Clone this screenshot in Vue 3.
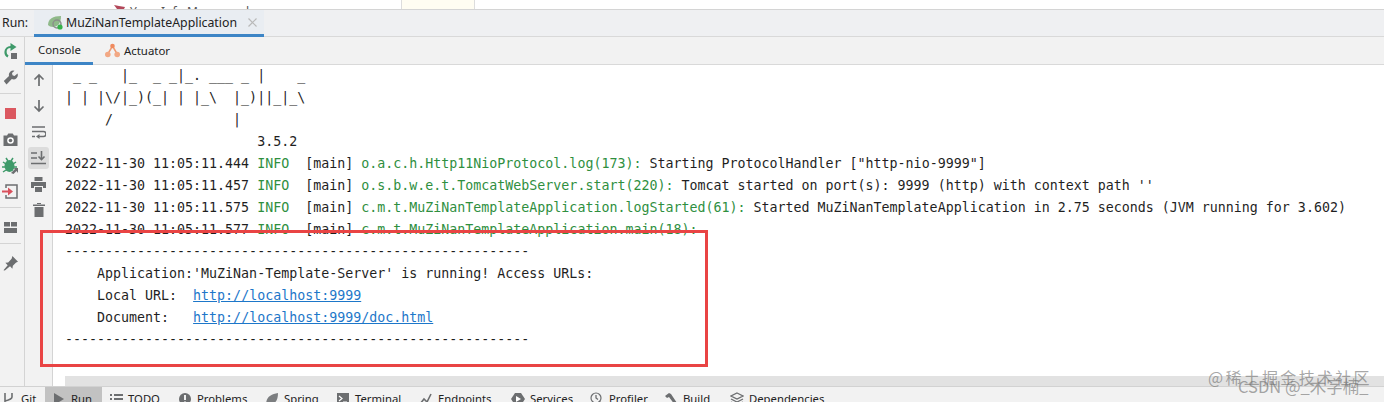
<script setup>
const banner = [
  ' _ _   |_  _ _|_. ___ _ |    _ ',
  '| | |\\/|_)(_| | |_\\  |_)||_|_\\ ',
  '     /               |         ',
  '                        3.5.2 ',
]
const logs = [
  { t: '2022-11-30 11:05:11.444 ', c: 'o.a.c.h.Http11NioProtocol.log(173):', m: ' Starting ProtocolHandler ["http-nio-9999"]' },
  { t: '2022-11-30 11:05:11.457 ', c: 'o.s.b.w.e.t.TomcatWebServer.start(220):', m: " Tomcat started on port(s): 9999 (http) with context path ''" },
  { t: '2022-11-30 11:05:11.575 ', c: 'c.m.t.MuZiNanTemplateApplication.logStarted(61):', m: ' Started MuZiNanTemplateApplication in 2.75 seconds (JVM running for 3.602)' },
  { t: '2022-11-30 11:05:11.577 ', c: 'c.m.t.MuZiNanTemplateApplication.main(18):', m: '' },
]
const thread = '  [main] '
const dashes = '-'.repeat(58)
const appLine = "    Application:'MuZiNan-Template-Server' is running! Access URLs:"
const localLabel = '    Local URL:  '
const docLabel = '    Document:   '
const bottom = [
  { k: 'git', label: 'Git', w: 45 },
  { k: 'run', label: 'Run', w: 57 },
  { k: 'todo', label: 'TODO', w: 69 },
  { k: 'problems', label: 'Problems', w: 87 },
  { k: 'spring', label: 'Spring', w: 71 },
  { k: 'terminal', label: 'Terminal', w: 83 },
  { k: 'endpoints', label: 'Endpoints', w: 92 },
  { k: 'services', label: 'Services', w: 79 },
  { k: 'profiler', label: 'Profiler', w: 74 },
  { k: 'build', label: 'Build', w: 66 },
  { k: 'deps', label: 'Dependencies', w: 110 },
]
</script>

<template>
  <div class="ide">
    <div class="strip">
      <svg class="strip-icon" width="14" height="9" viewBox="0 0 14 9"><path d="M1 5l5 1 6 1-1 2H4z" fill="#b3485a" /></svg>
      <span class="strip-text">Yuan Info Manager-d</span>
      <div class="strip-panel"></div>
    </div>

    <div class="runbar">
      <span class="run-label">Run:</span>
      <div class="run-tab">
        <svg width="16" height="16" viewBox="0 0 16 16">
          <path d="M1 11C1 5 6 2 14 2c0 7-3 11-8 11-2 0-4-1-5-2z" fill="#8fb98a" />
          <circle cx="10" cy="10" r="4" fill="none" stroke="#8a8f8a" stroke-width="1.500" />
          <circle cx="13" cy="13" r="2.600" fill="#35b24a" />
        </svg>
        <span>MuZiNanTemplateApplication</span>
        <svg class="close" width="9" height="9" viewBox="0 0 9 9"><path d="M.5.5l8 8M8.500.5l-8 8" stroke="#b9b9b9" stroke-width="1.200" /></svg>
      </div>
    </div>

    <div class="body">
      <div class="tool1">
        <div class="btn">
          <svg width="15" height="16" viewBox="0 0 15 16"><path d="M11 4H7.500A5 5 0 0 0 2.500 9a5 5 0 0 0 2.500 4.500" fill="none" stroke="#3f9a6a" stroke-width="2.200" /><path d="M7.500 0l6 4-6 4z" fill="#3f9a6a" /><rect x="8" y="10" width="6" height="6" fill="#6c6e70" /></svg>
        </div>
        <div class="btn">
          <svg width="15" height="15" viewBox="0 0 15 15"><path d="M14.500 3.500l-3 2.500-2-.8-.5-2.200L11.500.8A4.300 4.300 0 0 0 6 6L.8 11 3.500 14.500 8.800 9a4.300 4.300 0 0 0 5.700-5.500z" fill="#6c6e70" /></svg>
        </div>
        <div class="sep"></div>
        <div class="btn"><span class="stop"></span></div>
        <div class="btn">
          <svg width="15" height="13" viewBox="0 0 15 13"><path d="M.5 2.500h3.500L5.300.5h4.400L11 2.500h3.500V13H.5z" fill="#6c6e70" /><circle cx="7.500" cy="7.500" r="3.300" fill="#fff" /><circle cx="7.500" cy="7.500" r="1.800" fill="#6c6e70" /></svg>
        </div>
        <div class="btn">
          <svg width="17" height="17" viewBox="0 0 17 17"><ellipse cx="7.500" cy="9" rx="5" ry="6" fill="#3f9a6a" /><path d="M1 5l3 2M14 5l-3 2M0 10h3M15 10h-3M1 15l3-2M4 1l2 3M11 1L9 4" stroke="#3f9a6a" stroke-width="1.500" /><path d="M9 16l4-4-2-1h5v5l-1.500-2-3 3z" fill="#6c6e70" /></svg>
        </div>
        <div class="btn">
          <svg width="17" height="15" viewBox="0 0 17 15"><path d="M4 4V1h11v13H4v-3" fill="none" stroke="#6c6e70" stroke-width="1.500" /><path d="M0 6.500h6V3.500l5 4-5 4v-3H0z" fill="#d9505c" /></svg>
        </div>
        <div class="sep"></div>
        <div class="btn">
          <svg width="13" height="11" viewBox="0 0 13 11"><path d="M0 0h6v4.500H0zM7 0h6v4.500H7zM0 6h13v5H0z" fill="#6c6e70" /></svg>
        </div>
        <div class="sep"></div>
        <div class="btn">
          <svg width="15" height="15" viewBox="0 0 16 16"><path d="M10 0l6 6-2 .8-3.500 3.700-.5 3-2.500-2.500L2 15.500l-1.500-.2 4.500-5.500L2.500 7.300l3-.5L9.200 3z" fill="#6c6e70" /></svg>
        </div>
      </div>

      <div class="main">
        <div class="subtabs">
          <div class="subtab active">Console</div>
          <div class="subtab">
            <svg width="15" height="15" viewBox="0 0 15 15"><path d="M2.500 11.500L7.500 3l5 8.500" fill="none" stroke="#ef9a72" stroke-width="1.500" /><circle cx="7.500" cy="3" r="2.300" fill="#ef8a5e" /><circle cx="2.800" cy="11.500" r="2.800" fill="#f2a884" /><circle cx="12.200" cy="11.500" r="2.800" fill="#f2a884" /></svg>
            <span>Actuator</span>
          </div>
        </div>

        <div class="content">
          <div class="tool2">
            <div class="btn2">
              <svg width="14" height="14" viewBox="0 0 14 14"><path d="M7 13V2M2.500 6.500L7 2l4.500 4.500" fill="none" stroke="#6c6e70" stroke-width="1.700" /></svg>
            </div>
            <div class="btn2">
              <svg width="14" height="14" viewBox="0 0 14 14"><path d="M7 1v11M2.500 7.500L7 12l4.500-4.500" fill="none" stroke="#6c6e70" stroke-width="1.700" /></svg>
            </div>
            <div class="btn2">
              <svg width="15" height="14" viewBox="0 0 15 14"><path d="M1 2h13M1 6.500h11.500a2.200 2.200 0 0 1 0 5H7M1 11.500h3" fill="none" stroke="#6c6e70" stroke-width="1.500" /><path d="M8.500 9v5L5 11.500z" fill="#6c6e70" /></svg>
            </div>
            <div class="btn2 on">
              <svg width="15" height="14" viewBox="0 0 15 14"><path d="M0 2h6M0 7h6M0 12.500h15M10.500 0v8M7.500 5.500l3 3.200 3-3.200" fill="none" stroke="#6c6e70" stroke-width="1.600" /></svg>
            </div>
            <div class="btn2">
              <svg width="15" height="15" viewBox="0 0 15 15"><path d="M3.500 0h8v4h-8zM0 5h15v6h-3V9H3v2H0zM4 10h7v5H4z" fill="#6c6e70" /></svg>
            </div>
            <div class="btn2">
              <svg width="12" height="14" viewBox="0 0 12 14"><path d="M0 1.500h12V3H0zM4 0h4v1H4zM1.500 4h9v10h-9z" fill="#6c6e70" /></svg>
            </div>
          </div>

          <div class="console">
            <div class="lines">
              <div v-for="(b, i) in banner" :key="'b' + i" class="line">{{ b }}</div>
              <div v-for="l in logs" :key="l.t" class="line">{{ l.t }}<span class="green">INFO</span>{{ thread }}<span class="green">{{ l.c }}</span>{{ l.m }}</div>
              <div class="line">{{ dashes }}</div>
              <div class="line">{{ appLine }}</div>
              <div class="line">{{ localLabel }}<span class="link">http://localhost:9999</span></div>
              <div class="line">{{ docLabel }}<span class="link">http://localhost:9999/doc.html</span></div>
              <div class="line">{{ dashes }}</div>
            </div>
            <div class="hscroll"></div>
          </div>
        </div>
      </div>
    </div>

    <div class="statusbar">
      <div v-for="b in bottom" :key="b.k" class="st" :class="{ cur: b.k === 'run' }" :style="{ width: b.w + 'px' }">
        <svg width="14" height="14" viewBox="0 0 14 14">
          <path v-if="b.k === 'git'" d="M3 1v12M10 1v4c0 2-3 3-7 4" fill="none" stroke="#6c6e70" stroke-width="1.600" />
          <template v-else-if="b.k === 'run'"><path d="M2 1l10 6-10 6z" fill="#6c6e70" /><circle cx="12" cy="12" r="2" fill="#35b24a" /></template>
          <path v-else-if="b.k === 'todo'" d="M1 2h2v2H1zM5 2h9v2H5zM1 6h2v2H1zM5 6h9v2H5zM1 10h2v2H1zM5 10h9v2H5z" fill="#6c6e70" />
          <template v-else-if="b.k === 'problems'"><circle cx="7" cy="7" r="6" fill="#6c6e70" /><path d="M7 3v5M7 9.500v2" stroke="#fff" stroke-width="1.800" /></template>
          <path v-else-if="b.k === 'spring'" d="M1 13C1 5 6 2 13 1c0 8-3 11-8 11-1 0-3 0-4 1z" fill="#7c7e80" />
          <template v-else-if="b.k === 'terminal'"><rect x="1" y="1" width="12" height="12" fill="#6c6e70" /><path d="M3 4l3 2.500-3 2.500M7 10h4" fill="none" stroke="#fff" stroke-width="1.200" /></template>
          <path v-else-if="b.k === 'endpoints'" d="M1 12l4-5 3 3 4-8" fill="none" stroke="#6c6e70" stroke-width="1.600" />
          <template v-else-if="b.k === 'services'"><path d="M4 1h6l4 6-4 6H4L0 7z" fill="#6c6e70" /><path d="M5 4l5 3-5 3z" fill="#fff" /></template>
          <template v-else-if="b.k === 'profiler'"><circle cx="6" cy="6" r="5" fill="none" stroke="#6c6e70" stroke-width="1.200" /><path d="M6 3v3l2 1.500M9 9l4 4" fill="none" stroke="#6c6e70" stroke-width="1.300" /></template>
          <path v-else-if="b.k === 'build'" d="M1 4l4-3 2 1 6 9-2 2-6-8-2 1z" fill="#6c6e70" />
          <path v-else d="M7 1l6 3-6 3-6-3zM1 7l6 3 6-3M1 10l6 3 6-3" fill="none" stroke="#6c6e70" stroke-width="1.300" />
        </svg>
        <span>{{ b.label }}</span>
      </div>
    </div>

    <div class="redbox"></div>
    <div class="wm wm1">@稀土掘金技术社区</div>
    <div class="wm wm2">CSDN @_木字楠_</div>
  </div>
</template>

<style>
html, body { margin: 0; background: #fff; overflow: hidden; }
</style>

<style scoped>
.ide {
  position: relative;
  width: 1384px;
  height: 402px;
  overflow: hidden;
  display: flex;
  flex-direction: column;
  background: #fff;
  font-family: "Noto Sans", sans-serif;
  color: #222;
}
.strip {
  height: 9px;
  flex: none;
  display: flex;
  align-items: flex-start;
  overflow: hidden;
  background: #fff;
  padding-left: 113px;
  box-sizing: border-box;
}
.strip-icon { flex: none; }
.strip-text {
  flex: none;
  width: 250px;
  height: 5px;
  overflow: hidden;
  padding-left: 3px;
  box-sizing: border-box;
  font-size: 12px;
  line-height: 16px;
  margin-top: 4px;
  color: #555;
  white-space: nowrap;
}
.strip-panel {
  flex: none;
  width: 74px;
  height: 9px;
  margin-left: 24px;
  box-sizing: border-box;
  background: #fffdf2;
  border-left: 1px solid #ddd;
  border-right: 1px solid #ddd;
}
.runbar {
  height: 28px;
  flex: none;
  display: flex;
  background: #eff0f2;
  border-top: 1px solid #d4d4d4;
  border-bottom: 1px solid #d9d9d9;
  box-sizing: border-box;
  font-size: 12.3px;
}
.run-label { width: 34px; padding-left: 2px; box-sizing: border-box; line-height: 26px; }
.run-tab {
  width: 230px;
  display: flex;
  align-items: center;
  gap: 3px;
  padding-left: 13px;
  box-sizing: border-box;
  border-bottom: 3px solid #3d85c6;
  background: #e9edf2;
  height: 27px;
}
.close { margin-left: 8px; }
.body { flex: 1; display: flex; min-height: 0; }
.tool1 {
  width: 25px;
  flex: none;
  background: #f2f2f2;
  border-right: 1px solid #d4d4d4;
  box-sizing: border-box;
  padding: 1px 3px 0 0;
}
.btn {
  height: 26px;
  display: flex;
  align-items: center;
  justify-content: center;
}
.sep { height: 7px; margin-top: 3px; border-top: 1px solid #d4d4d4; box-sizing: border-box; }
.stop { width: 11px; height: 11px; background: #db5860; }
.main { flex: 1; display: flex; flex-direction: column; min-width: 0; }
.subtabs {
  height: 28px;
  flex: none;
  display: flex;
  background: #f2f2f2;
  border-bottom: 1px solid #d9d9d9;
  box-sizing: border-box;
  font-size: 11.4px;
}
.subtab {
  display: flex;
  align-items: center;
  gap: 4px;
  padding-left: 12px;
}
.subtab.active {
  width: 68px;
  padding-left: 13px;
  box-sizing: border-box;
  border-bottom: 3px solid #3d85c6;
  margin-bottom: -1px;
  background: #f2f2f2;
}
.content { flex: 1; display: flex; min-height: 0; }
.tool2 {
  width: 28px;
  flex: none;
  background: #f2f2f2;
  border-right: 1px solid #d4d4d4;
  box-sizing: border-box;
  padding-top: 2px;
}
.btn2 {
  height: 26px;
  display: flex;
  align-items: center;
  justify-content: center;
  border-radius: 3px;
}
.btn2.on { background: #dcdcdc; height: 22px; margin: 2px 3px 2px 3px; }
.console { flex: 1; display: flex; flex-direction: column; min-width: 0; background: #fff; }
.lines {
  flex: 1;
  padding-left: 12px;
  font-family: "DejaVu Sans Mono", monospace;
  font-size: 13.3px;
  line-height: 22px;
  color: #1f1f1f;
  white-space: pre;
}
.line { height: 22px; }
.green { color: #2f8f3f; }
.link { color: #1d77c9; text-decoration: underline; }
.hscroll { height: 10px; margin-left: 12px; background: #e2e2e2; flex: none; }
.statusbar {
  height: 16px;
  flex: none;
  display: flex;
  overflow: hidden;
  background: #f2f2f2;
  border-top: 1px solid #d2d2d2;
  box-sizing: border-box;
  font-size: 11.3px;
}
.st {
  flex: none;
  display: flex;
  align-items: flex-start;
  gap: 5px;
  padding: 4px 0 0 7px;
  box-sizing: border-box;
  line-height: 16px;
}
.st:first-child { padding-left: 2px; }
.st svg { flex: none; margin-top: 1px; }
.st.cur { background: #c2c2c2; }
.redbox {
  position: absolute;
  left: 40px;
  top: 230px;
  width: 668px;
  height: 137px;
  box-sizing: border-box;
  border: 3px solid #e94444;
}
.wm {
  position: absolute;
  line-height: 20px;
  color: rgba(110, 110, 110, 0.6);
  white-space: nowrap;
  font-family: "Noto Sans CJK SC", "Noto Sans", sans-serif;
}
.wm1 { left: 1208px; top: 367px; font-size: 16px; letter-spacing: 2.3px; }
.wm2 { left: 1238px; top: 376px; font-size: 16.5px; }
</style>
